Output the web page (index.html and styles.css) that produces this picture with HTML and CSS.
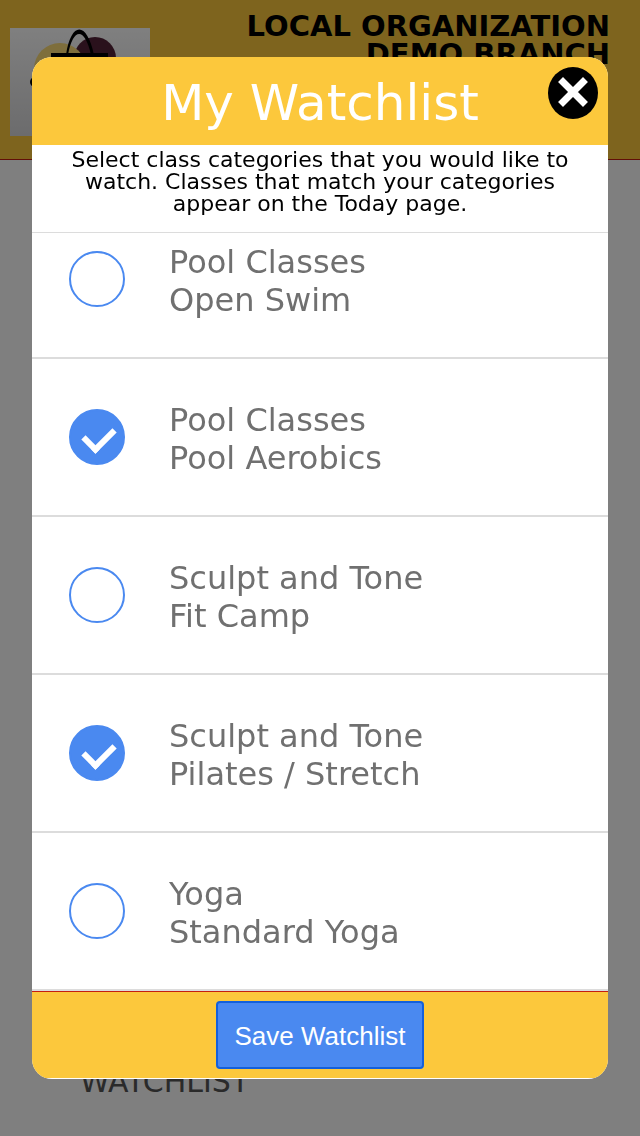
FILE: index.html
```html
<!DOCTYPE html>
<html lang="en">
<head>
  <meta charset="UTF-8">
  <meta name="viewport" content="width=device-width, initial-scale=1">
  <title>My Watchlist</title>
  <link rel="stylesheet" href="styles.css">
</head>
<body>
  <div class="page">
    <header class="page-header">
      <svg class="logo" viewBox="0 0 140 108" role="img" aria-label="Logo">
        <defs>
          <linearGradient id="logoBg" x1="0" y1="0" x2="0" y2="1">
            <stop offset="0" stop-color="#ffffff"/>
            <stop offset="1" stop-color="#d8d8da"/>
          </linearGradient>
        </defs>
        <rect width="140" height="108" fill="url(#logoBg)"/>
        <circle cx="85" cy="30" r="21" fill="#542238"/>
        <circle cx="50" cy="41" r="26" fill="#fcdc78"/>
        <path d="M56 27 C61 -7 77 -7 84 27 L81 27 C75 -1 63 -1 58 27 Z" fill="#000"/>
        <rect x="41" y="25" width="57" height="60" fill="#000"/>
        <circle cx="25" cy="54" r="5" fill="#000"/>
      </svg>
      <div class="branch">LOCAL ORGANIZATION<br>DEMO BRANCH</div>
    </header>
    <div class="page-body">
      <h2 class="section-title">WATCHLIST</h2>
    </div>
  </div>

  <div class="overlay">
    <form class="modal">
      <div class="modal-header">
        <h1>My Watchlist</h1>
        <button type="button" class="close" aria-label="Close">
          <svg viewBox="0 0 50 52"><path d="M15 15 L35 35 M35 15 L15 35"/></svg>
        </button>
      </div>
      <p class="intro">Select class categories that you would like to watch. Classes that match your categories appear on the Today page.</p>

      <div class="list">
        <div class="list-items">
          <label class="item">
            <input type="checkbox">
            <span>Pool Classes<br>Open Swim</span>
          </label>
          <label class="item">
            <input type="checkbox" checked>
            <span>Pool Classes<br>Pool Aerobics</span>
          </label>
          <label class="item">
            <input type="checkbox">
            <span>Sculpt and Tone<br>Fit Camp</span>
          </label>
          <label class="item">
            <input type="checkbox" checked>
            <span>Sculpt and Tone<br>Pilates / Stretch</span>
          </label>
          <label class="item">
            <input type="checkbox">
            <span>Yoga<br>Standard Yoga</span>
          </label>
        </div>
      </div>

      <div class="modal-footer">
        <button type="submit" class="save">Save Watchlist</button>
      </div>
    </form>
  </div>
</body>
</html>
```
FILE: styles.css
```css
*,
*::after {
  box-sizing: border-box;
}

body {
  margin: 0;
  font-family: Verdana, "DejaVu Sans", sans-serif;
  background: #fff;
  color: #000;
}

.page {
  display: flex;
  flex-direction: column;
  height: 100vh;
}

.page-header {
  display: flex;
  justify-content: space-between;
  height: 160px;
  padding: 12px 30px 0 10px;
  background: #fcc83c;
  border-bottom: 1px solid #c41e10;
}

.logo {
  width: 140px;
  height: 108px;
  margin-top: 16px;
}

.branch {
  font-size: 29px;
  font-weight: bold;
  line-height: 28px;
  text-align: right;
}

.page-body {
  flex: 1;
  display: flex;
  align-items: flex-end;
  padding: 0 80px 36px;
}

.section-title {
  margin: 0;
  font-size: 30px;
  font-weight: normal;
  line-height: 36px;
  color: #555;
}

/* modal */
.overlay {
  position: fixed;
  inset: 0;
  display: flex;
  padding: 57px 32px;
  background: rgba(0, 0, 0, 0.5);
}

.modal {
  flex: 1;
  display: flex;
  flex-direction: column;
  min-width: 0;
  overflow: hidden;
  background: #fff;
  border-radius: 20px;
  padding-bottom: 1px;
}

.modal-header {
  position: relative;
  padding-top: 4px;
  background: #fcc83c;
  text-align: center;
}

.modal-header h1 {
  margin: 0;
  font-size: 50px;
  font-weight: normal;
  line-height: 84px;
  color: #fff;
}

.close {
  position: absolute;
  top: 10px;
  right: 10px;
  width: 50px;
  height: 52px;
  padding: 0;
  border: none;
  border-radius: 50%;
  background: #000;
}

.close svg {
  display: block;
}

.close path {
  stroke: #fff;
  stroke-width: 7;
  stroke-linecap: square;
}

.intro {
  margin: 0;
  padding: 4px 32px 17px;
  font-size: 22px;
  line-height: 22px;
  text-align: center;
  border-bottom: 1px solid #dcdcdc;
}

/* reversed column keeps the list scrolled to its end */
.list {
  flex: 1;
  display: flex;
  flex-direction: column-reverse;
  min-height: 0;
  overflow-y: auto;
  scrollbar-width: none;
}

.item {
  display: flex;
  align-items: center;
  gap: 44px;
  height: 158px;
  padding: 0 37px;
  border-bottom: 2px solid #dcdcdc;
  font-size: 32px;
  line-height: 38px;
  color: #707070;
}

.item span {
  padding-top: 4px;
}

.item input {
  appearance: none;
  display: grid;
  place-items: center;
  flex: none;
  width: 56px;
  height: 56px;
  margin: 0;
  border: 2px solid #4a89f0;
  border-radius: 50%;
}

.item input:checked {
  background: #4a89f0;
}

.item input:checked::after {
  content: "";
  width: 30px;
  height: 20px;
  margin: 0 0 2px 4px;
  border: solid #fff;
  border-width: 0 0 6px 6px;
  transform: rotate(-45deg);
}

.modal-footer {
  padding: 9px;
  background: #fcc83c;
  border-top: 1px solid #c41e10;
  text-align: center;
}

.save {
  display: block;
  margin: 0 auto;
  padding: 2px 17px 0;
  border: 2px solid #1360dc;
  border-radius: 4px;
  background: #4a89f0;
  color: #fff;
  font-family: Helvetica, "Liberation Sans", sans-serif;
  font-size: 26px;
  line-height: 62px;
}
```
